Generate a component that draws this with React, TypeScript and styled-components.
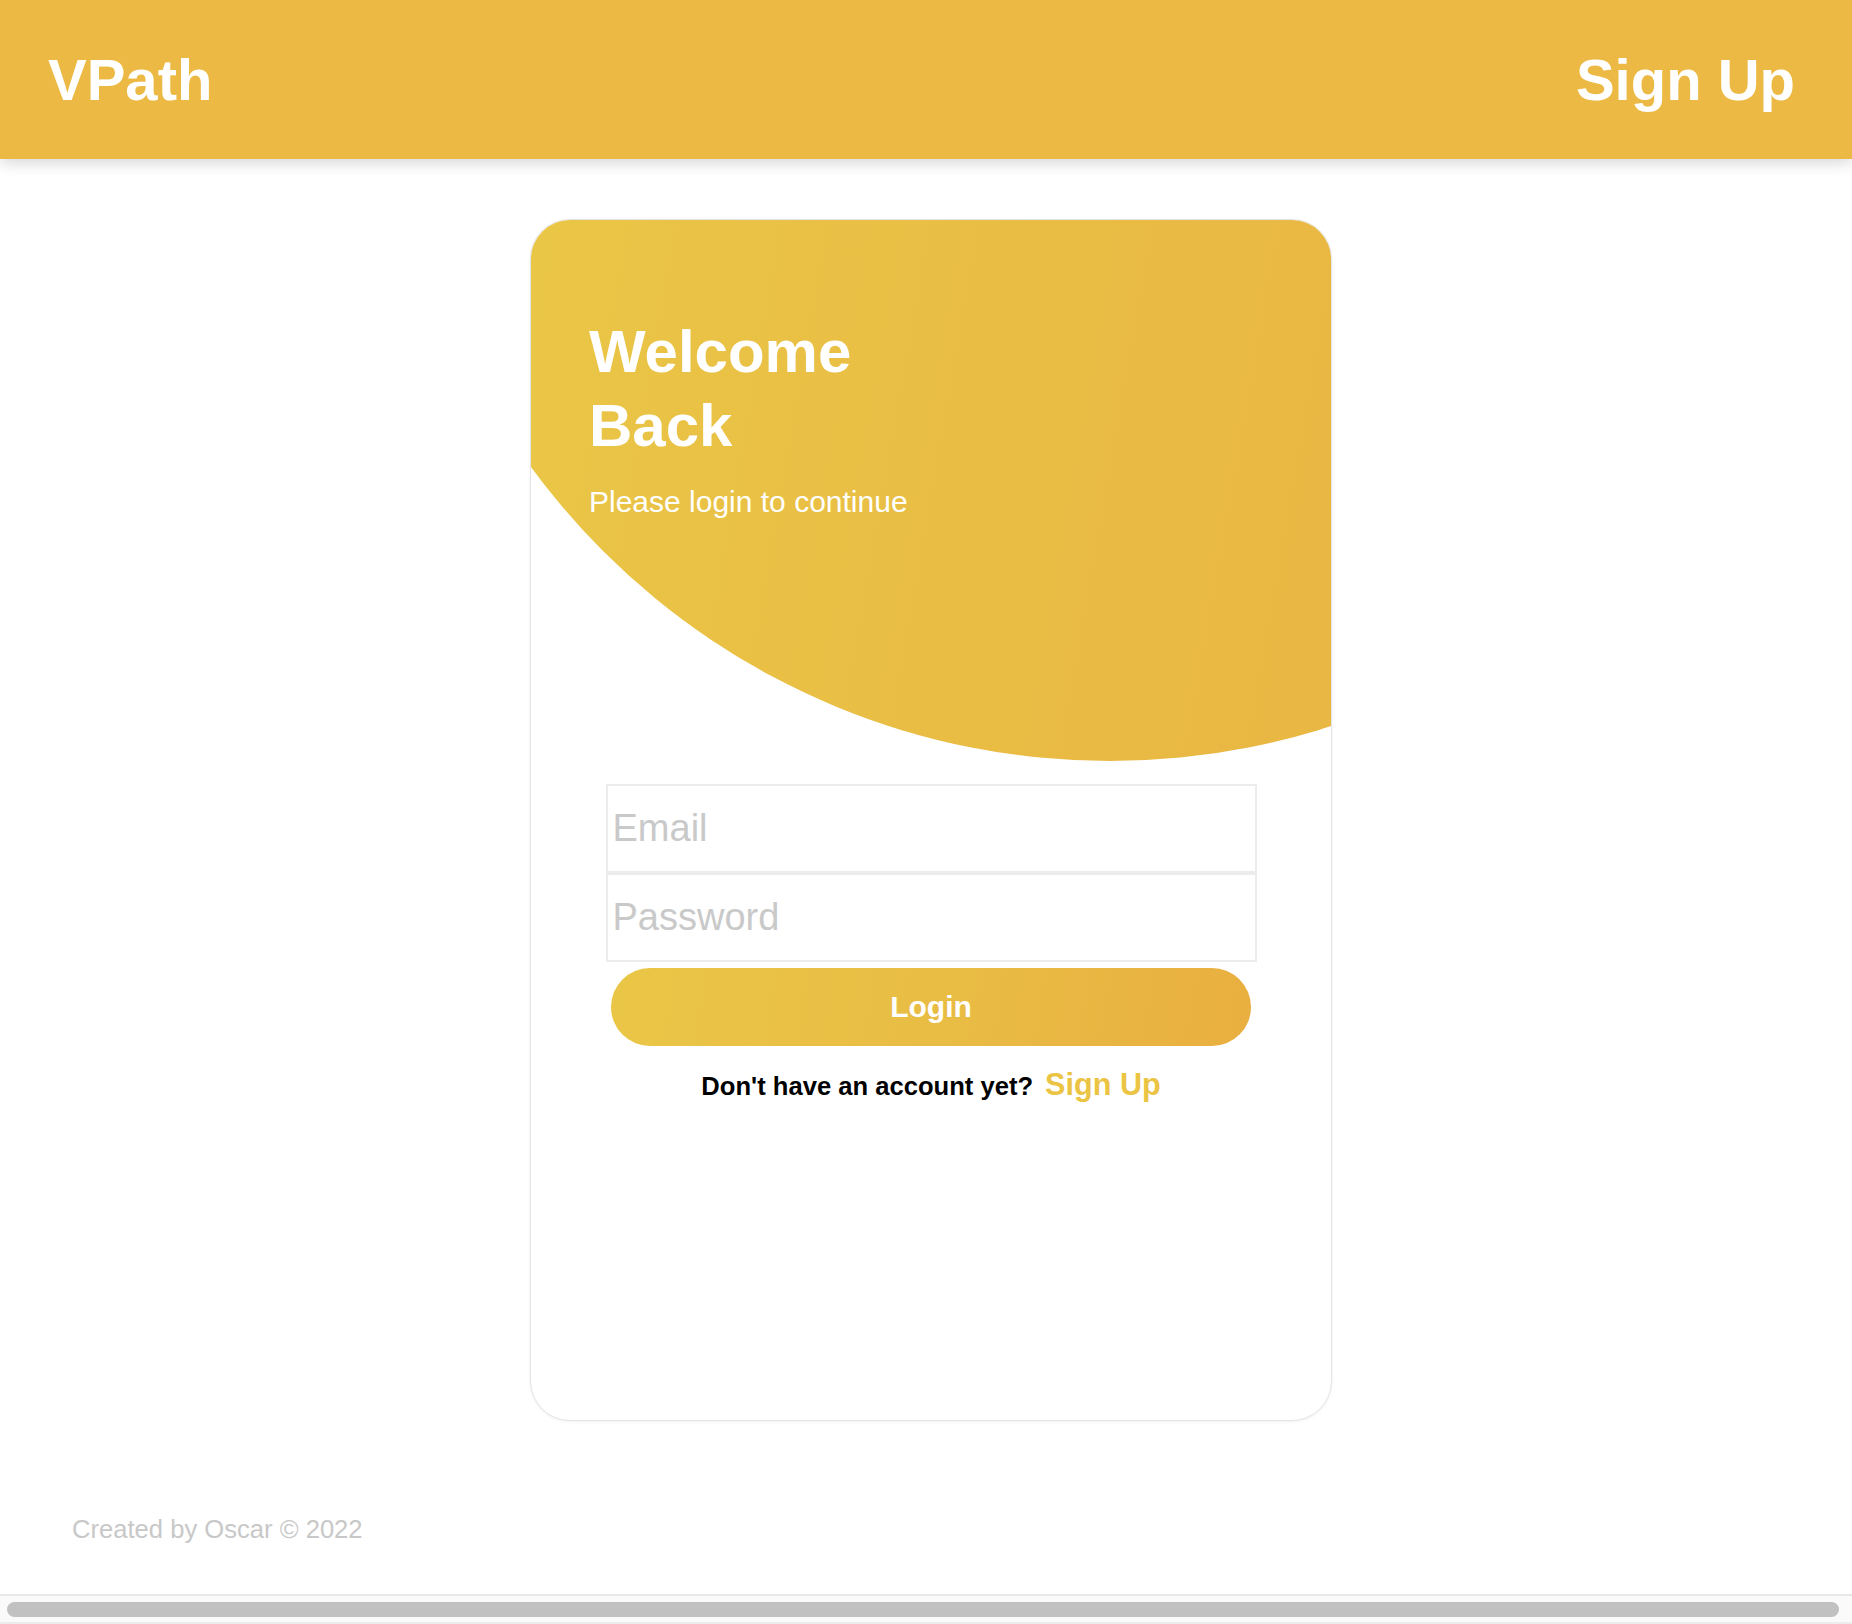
import React from "react";
import styled, { createGlobalStyle } from "styled-components";

const GlobalStyle = createGlobalStyle`
  html, body {
    margin: 0;
    padding: 0;
    background: #ffffff;
    overflow: hidden;
  }
  body {
    font-family: "Liberation Sans", Arial, Helvetica, sans-serif;
  }
  * {
    box-sizing: border-box;
  }
`;

const Page = styled.div`
  display: flex;
  flex-direction: column;
  height: 100vh;
`;

const Header = styled.header`
  position: relative;
  z-index: 1;
  flex: 0 0 159px;
  display: flex;
  align-items: center;
  justify-content: space-between;
  padding: 0 57px 0 48px;
  background-color: #ecba44;
  box-shadow: 0 4px 14px rgba(0, 0, 0, 0.16);
`;

const Brand = styled.a`
  color: #ffffff;
  font-size: 58px;
  font-weight: 700;
  text-decoration: none;
`;

const NavLink = styled.a`
  color: #ffffff;
  font-size: 58px;
  font-weight: 700;
  text-decoration: none;
`;

const Main = styled.main`
  display: flex;
  flex-direction: column;
  align-items: center;
  padding: 60px 0 0 10px;
`;

const Card = styled.div`
  width: 802px;
  height: 1202px;
  border: 1px solid #e4e4e4;
  border-radius: 40px;
  overflow: hidden;
  background: #ffffff;
  box-shadow: 0 1px 3px rgba(0, 0, 0, 0.06);
`;

const Hero = styled.section`
  height: 543px;
  padding: 95px 58px 0;
  background: linear-gradient(100deg, #eac646 0%, #e9bd44 55%, #e9b743 100%);
  clip-path: circle(717px at 579px -176px);
  color: #ffffff;
`;

const Title = styled.h1`
  margin: 0;
  max-width: 320px;
  font-size: 60px;
  line-height: 74px;
  font-weight: 700;
`;

const Subtitle = styled.p`
  margin: 22px 0 0;
  font-size: 30px;
`;

const Form = styled.form`
  display: flex;
  flex-direction: column;
  align-items: center;
  margin-top: 21px;
`;

const InputBox = styled.input`
  width: 651px;
  height: 89px;
  padding: 0 5px;
  border: 2px solid #ececec;
  border-radius: 0;
  outline: none;
  font-family: inherit;
  font-size: 38px;
  color: #333333;
  background: #ffffff;

  &::placeholder {
    color: #c9c9c9;
  }
`;

const SubmitButton = styled.button`
  margin-top: 6px;
  width: 640px;
  height: 78px;
  border: none;
  border-radius: 39px;
  background: linear-gradient(100deg, #eac646 0%, #e9bd44 50%, #e9af40 100%);
  color: #ffffff;
  font-family: inherit;
  font-size: 30px;
  font-weight: 700;
  cursor: pointer;
`;

const Prompt = styled.p`
  margin: 21px 0 0;
  display: flex;
  align-items: baseline;
  font-size: 25.6px;
  font-weight: 700;
  color: #000000;
`;

const PromptLink = styled.a`
  margin-left: 12px;
  font-size: 30.6px;
  font-weight: 700;
  color: #ebc443;
  text-decoration: none;
`;

const Footer = styled.footer`
  margin-top: 94px;
  padding-left: 72px;
  font-size: 25.6px;
  color: #c8c8c8;
`;

const Spacer = styled.div`
  flex: 1;
`;

const ScrollTrack = styled.div`
  flex: 0 0 30px;
  padding: 6px 13px 5px 7px;
  border-top: 2px solid #e8e8e8;
  border-bottom: 2px solid #ececec;
  background: #fafafa;
`;

const ScrollThumb = styled.div`
  height: 100%;
  border-radius: 8px;
  background: #c1c1c1;
`;

export default function App() {
  return (
    <>
      <GlobalStyle />
      <Page>
        <Header>
          <Brand href="#">VPath</Brand>
          <NavLink href="#">Sign Up</NavLink>
        </Header>
        <Main>
          <Card>
            <Hero>
              <Title>Welcome Back</Title>
              <Subtitle>Please login to continue</Subtitle>
            </Hero>
            <Form onSubmit={(e) => e.preventDefault()}>
              <InputBox type="email" placeholder="Email" />
              <InputBox type="password" placeholder="Password" />
              <SubmitButton type="submit">Login</SubmitButton>
              <Prompt>
                Don't have an account yet?
                <PromptLink href="#">Sign Up</PromptLink>
              </Prompt>
            </Form>
          </Card>
        </Main>
        <Footer>Created by Oscar © 2022</Footer>
        <Spacer />
        <ScrollTrack>
          <ScrollThumb />
        </ScrollTrack>
      </Page>
    </>
  );
}
